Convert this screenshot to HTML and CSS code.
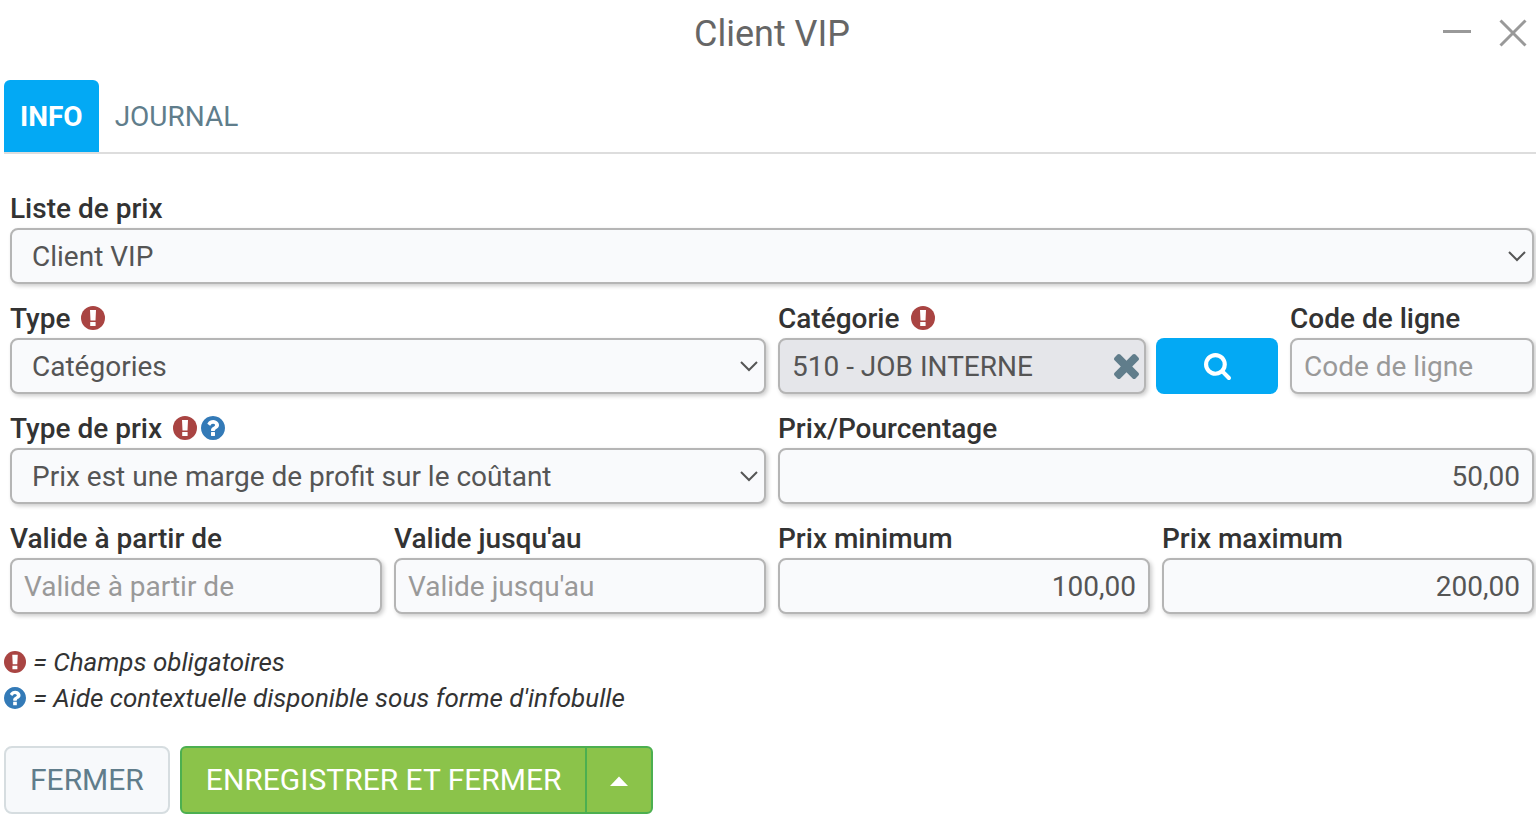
FILE: index.html
```html
<!DOCTYPE html>
<html lang="fr">
<head>
  <meta charset="UTF-8">
  <meta name="viewport" content="width=device-width, initial-scale=1.0">
  <title>Client VIP</title>
  <link rel="stylesheet" href="styles.css">
</head>
<body>
  <!-- shared icons -->
  <svg class="sprite" aria-hidden="true">
    <symbol id="icon-required" viewBox="0 0 24 24">
      <circle cx="12" cy="12" r="12"/>
      <path d="M9 4h6l-.5 10.5h-5zM9.2 16h5.4v4H9.2z" fill="#fff"/>
    </symbol>
    <symbol id="icon-help" viewBox="128 128 1536 1536">
      <path d="M1024 1376v-192q0-14-9-23t-23-9h-192q-14 0-23 9t-9 23v192q0 14 9 23t23 9h192q14 0 23-9t9-23zm256-672q0-88-55.5-163t-138.5-116-170-41q-243 0-371 213-15 24 8 42l132 100q7 6 19 6 16 0 25-12 53-68 86-92 34-24 86-24 48 0 85.5 26t37.5 59q0 38-20 61t-68 45q-63 28-115.5 86.5t-52.5 125.5v36q0 14 9 23t23 9h192q14 0 23-9t9-23q0-19 21.5-49.5t54.5-49.5q32-18 49-28.5t46-35 44.5-48 28-60.5 12.5-81zm384 192q0 209-103 385.5t-279.5 279.5-385.5 103-385.5-103-279.5-279.5-103-385.5 103-385.5 279.5-279.5 385.5-103 385.5 103 279.5 279.5 103 385.5z"/>
    </symbol>
    <symbol id="icon-chevron" viewBox="0 0 18 12">
      <path d="M1 2l8 8 8-8" fill="none" stroke="currentColor" stroke-width="2"/>
    </symbol>
  </svg>

  <header class="header">
    <h1>Client VIP</h1>
    <div class="window-actions">
      <button type="button" aria-label="Réduire">
        <svg viewBox="0 0 28 28" fill="none" stroke="currentColor" stroke-width="3">
          <path d="M0 12.5h28"/>
        </svg>
      </button>
      <button type="button" aria-label="Quitter">
        <svg viewBox="0 0 28 28" fill="none" stroke="currentColor" stroke-width="3">
          <path d="M1.5 1.5l25 25M26.5 1.5l-25 25"/>
        </svg>
      </button>
    </div>
  </header>

  <nav class="tabs">
    <a href="#info" class="tab active">INFO</a>
    <a href="#journal" class="tab">JOURNAL</a>
  </nav>

  <form>
    <div class="fields" id="info">
      <div class="field span-12">
        <label for="priceList">Liste de prix</label>
        <div class="select">
          <select id="priceList"><option>Client VIP</option></select>
          <svg><use href="#icon-chevron"/></svg>
        </div>
      </div>

      <div class="field span-6">
        <label for="type">Type
          <span class="marks"><svg class="required"><use href="#icon-required"/></svg></span>
        </label>
        <div class="select">
          <select id="type"><option>Catégories</option></select>
          <svg><use href="#icon-chevron"/></svg>
        </div>
      </div>

      <div class="field span-4">
        <label for="category">Catégorie
          <span class="marks"><svg class="required"><use href="#icon-required"/></svg></span>
        </label>
        <div class="lookup">
          <div class="lookup-value">
            <input type="text" id="category" value="510 - JOB INTERNE" readonly>
            <button type="button" class="clear-btn" aria-label="Effacer">
              <svg viewBox="302 366 1188 1188" fill="currentColor">
                <path d="M1490 1322q0 40-28 68l-136 136q-28 28-68 28t-68-28l-294-294-294 294q-28 28-68 28t-68-28l-136-136q-28-28-28-68t28-68l294-294-294-294q-28-28-28-68t28-68l136-136q28-28 68-28t68 28l294 294 294-294q28-28 68-28t68 28l136 136q28 28 28 68t-28 68l-294 294 294 294q28 28 28 68z"/>
              </svg>
            </button>
          </div>
          <button type="button" class="search-btn" aria-label="Rechercher">
            <svg viewBox="64 128 1664 1664" fill="currentColor">
              <path d="M1216 832q0-185-131.5-316.5t-316.5-131.5-316.5 131.5-131.5 316.5 131.5 316.5 316.5 131.5 316.5-131.5 131.5-316.5zm512 832q0 52-38 90t-90 38q-54 0-90-38l-343-342q-179 124-399 124-143 0-273.5-55.5t-225-150-150-225-55.5-273.5 55.5-273.5 150-225 225-150 273.5-55.5 273.5 55.5 225 150 150 225 55.5 273.5q0 220-124 399l343 343q37 37 37 90z"/>
            </svg>
          </button>
        </div>
      </div>

      <div class="field span-2">
        <label for="lineCode">Code de ligne</label>
        <input type="text" id="lineCode" placeholder="Code de ligne">
      </div>

      <div class="field span-6">
        <label for="priceType">Type de prix
          <span class="marks">
            <svg class="required"><use href="#icon-required"/></svg>
            <svg class="help"><use href="#icon-help"/></svg>
          </span>
        </label>
        <div class="select">
          <select id="priceType"><option>Prix est une marge de profit sur le coûtant</option></select>
          <svg><use href="#icon-chevron"/></svg>
        </div>
      </div>

      <div class="field span-6">
        <label for="price">Prix/Pourcentage</label>
        <input type="text" id="price" class="number" value="50,00">
      </div>

      <div class="field span-3">
        <label for="validFrom">Valide à partir de</label>
        <input type="text" id="validFrom" placeholder="Valide à partir de">
      </div>
      <div class="field span-3">
        <label for="validTo">Valide jusqu'au</label>
        <input type="text" id="validTo" placeholder="Valide jusqu'au">
      </div>
      <div class="field span-3">
        <label for="minPrice">Prix minimum</label>
        <input type="text" id="minPrice" class="number" value="100,00">
      </div>
      <div class="field span-3">
        <label for="maxPrice">Prix maximum</label>
        <input type="text" id="maxPrice" class="number" value="200,00">
      </div>
    </div>

    <div class="legend">
      <p><svg class="required"><use href="#icon-required"/></svg>= Champs obligatoires</p>
      <p><svg class="help"><use href="#icon-help"/></svg>= Aide contextuelle disponible sous forme d'infobulle</p>
    </div>

    <div class="actions">
      <button type="button" class="btn btn-default">FERMER</button>
      <div class="btn-group">
        <button type="submit" class="btn btn-success">ENREGISTRER ET FERMER</button>
        <button type="button" class="btn btn-success btn-caret" aria-label="Autres actions">
          <svg viewBox="0 0 18 10" fill="currentColor"><path d="M9 .5l9 9.5H0z"/></svg>
        </button>
      </div>
    </div>
  </form>
</body>
</html>
```
FILE: styles.css
```css
:root {
  --primary: #03a9f4;
  --success: #8bc34a;
  --success-border: #4caf50;
  --slate: #607d8b;
  --text: #333;
  --text-field: #555;
  --placeholder: #999;
  --field-bg: #f9fafc;
  --field-border: #b5b5b5;
  --required: #a94442;
  --help: #337ab7;
}

* {
  box-sizing: border-box;
}

body {
  margin: 0;
  padding-left: 4px;
  font-family: Roboto, "Liberation Sans", sans-serif;
  font-size: 28px;
  color: var(--text);
  background: #fff;
}

button,
input,
select {
  font: inherit;
  color: inherit;
}

button {
  padding: 0;
  border: none;
  background: none;
  cursor: pointer;
}

svg {
  display: block;
  fill: currentColor;
}

.sprite {
  display: none;
}

.required {
  color: var(--required);
}

.help {
  color: var(--help);
}

/* Header */
.header {
  display: grid;
  grid-template-columns: 1fr auto 1fr;
  align-items: center;
  height: 68px;
  padding: 0 9px 0 13px;
}

.header h1 {
  grid-column: 2;
  margin: 0;
  font-size: 36px;
  font-weight: 400;
  color: #666;
}

.window-actions {
  display: flex;
  justify-content: flex-end;
  gap: 28px;
  padding-bottom: 3px;
  color: var(--placeholder);
}

.window-actions svg {
  width: 28px;
  height: 28px;
  fill: none;
}

/* Tabs */
.tabs {
  display: flex;
  margin-top: 12px;
  border-bottom: 2px solid #ddd;
}

.tab {
  padding: 2px 16px 0;
  line-height: 70px;
  border-radius: 6px 6px 0 0;
  color: var(--slate);
  text-decoration: none;
}

.tab.active {
  color: #fff;
  font-weight: 700;
  background: var(--primary);
}

/* Form */
.fields {
  display: grid;
  grid-template-columns: repeat(12, minmax(0, 1fr));
  gap: 14px 12px;
  padding: 34px 2px 30px 6px;
}

.span-2 { grid-column: span 2; }
.span-3 { grid-column: span 3; }
.span-4 { grid-column: span 4; }
.span-6 { grid-column: span 6; }
.span-12 { grid-column: span 12; }

.field label {
  display: flex;
  align-items: center;
  padding-top: 2px;
  line-height: 38px;
  font-weight: 500;
}

.marks {
  display: flex;
  gap: 4px;
  margin-left: 11px;
  padding-bottom: 2px;
}

.marks svg {
  width: 24px;
  height: 24px;
}

.field input,
.field select {
  display: block;
  width: 100%;
  height: 56px;
  padding: 0 12px;
  border: 2px solid var(--field-border);
  border-radius: 8px;
  color: var(--text-field);
  background: var(--field-bg);
  box-shadow: 2px 2px 4px rgba(0, 0, 0, 0.2);
}

.field input::placeholder {
  color: var(--placeholder);
}

.field input[readonly] {
  padding-right: 40px;
  background: #e5e6ea;
}

.field .number {
  text-align: right;
}

.select,
.lookup-value {
  position: relative;
}

.field select {
  padding: 0 40px 0 20px;
  appearance: none;
}

.select svg {
  position: absolute;
  top: 22px;
  right: 8px;
  width: 18px;
  height: 12px;
  color: var(--text-field);
  pointer-events: none;
}

.lookup {
  display: flex;
  gap: 10px;
}

.lookup-value {
  flex: 1;
}

.clear-btn {
  position: absolute;
  top: 16px;
  right: 7px;
  color: var(--slate);
}

.clear-btn svg {
  width: 25px;
  height: 25px;
}

.search-btn {
  display: flex;
  align-items: center;
  justify-content: center;
  width: 122px;
  border-radius: 8px;
  color: #fff;
  background: var(--primary);
}

.search-btn svg {
  width: 27px;
  height: 27px;
}

/* Legend */
.legend {
  font-size: 26px;
  font-style: italic;
  line-height: 36px;
}

.legend p {
  display: flex;
  align-items: center;
  gap: 7px;
  margin: 0;
}

.legend svg {
  width: 22px;
  height: 22px;
}

/* Buttons */
.actions {
  display: flex;
  gap: 10px;
  padding: 30px 0 4px;
}

.btn-group {
  display: flex;
}

.btn {
  height: 68px;
  padding: 0 24px 2px;
  border: 2px solid;
  border-radius: 8px;
  font-size: 30px;
}

.btn-default {
  color: var(--slate);
  border-color: #d6dde0;
  background: #f7f9fb;
}

.btn-success {
  padding-right: 23px;
  color: #fff;
  border-color: var(--success-border);
  border-radius: 6px 0 0 6px;
  background: var(--success);
}

.btn-caret {
  margin-left: -2px;
  padding: 2px 23px 0;
  border-radius: 0 6px 6px 0;
}

.btn-caret svg {
  width: 18px;
  height: 10px;
}
```
